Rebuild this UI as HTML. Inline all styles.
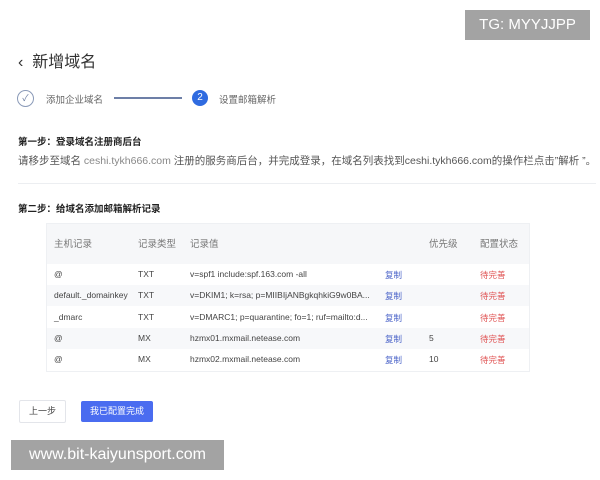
<!DOCTYPE html>
<html><head><meta charset="utf-8"><style>
body{margin:0;width:600px;height:480px;background:#fff;font-family:"Liberation Sans","Noto Sans CJK SC",sans-serif;position:relative;overflow:hidden;color:#333}
.a{position:absolute;white-space:nowrap}
.tbl{position:absolute;left:46px;top:223px;width:482px;height:147px;border:1px solid #eef0f3;background:#fff}
.hd{position:absolute;left:0;top:0;width:100%;height:40px;background:#f6f7f9}
.r{position:absolute;left:0;width:100%;height:21px;font-size:8.5px;color:#444}
.r span{position:absolute;top:5px}
.g{background:#f7f8fa}
</style></head><body>
<div class="a" style="left:465px;top:10px;width:125px;height:30px;background:#a3a3a3;color:#fff;font-size:15px;line-height:30px;text-align:center">TG: MYYJJPP</div>
<div class="a" style="left:18px;top:48px;font-size:16px;color:#333">‹&nbsp; 新增域名</div>
<div class="a" style="left:17px;top:90px;width:15px;height:15px;border:1px solid #8a9ab8;border-radius:50%;font-size:9px;color:#6a7ca0;text-align:center;line-height:15px">✓</div>
<div class="a" style="left:46px;top:92px;font-size:9.5px;color:#666">添加企业域名</div>
<div class="a" style="left:114px;top:97px;width:68px;height:2px;background:#6d7fa7"></div>
<div class="a" style="left:192px;top:90px;width:16px;height:16px;border-radius:50%;background:#2f6be0;color:#fff;font-size:10px;text-align:center;line-height:16px">2</div>
<div class="a" style="left:219px;top:92px;font-size:9.5px;color:#666">设置邮箱解析</div>
<div class="a" style="left:18px;top:134px;font-size:9.5px;font-weight:bold;color:#222">第一步：登录域名注册商后台</div>
<div class="a" style="left:18px;top:153px;font-size:10.5px;color:#555">请移步至域名 <span style="color:#888">ceshi.tykh666.com</span> 注册的服务商后台，并完成登录，在域名列表找到ceshi.tykh666.com的操作栏点击”解析 ”。</div>
<div class="a" style="left:18px;top:183px;width:578px;height:1px;background:#eceef1"></div>
<div class="a" style="left:18px;top:201px;font-size:9.5px;font-weight:bold;color:#222">第二步：给域名添加邮箱解析记录</div>
<div class="tbl">
<div class="hd"><div class="a" style="left:7px;top:12px;font-size:9.5px;color:#777">主机记录</div><div class="a" style="left:91px;top:12px;font-size:9.5px;color:#777">记录类型</div><div class="a" style="left:143px;top:12px;font-size:9.5px;color:#777">记录值</div><div class="a" style="left:382px;top:12px;font-size:9.5px;color:#777">优先级</div><div class="a" style="left:433px;top:12px;font-size:9.5px;color:#777">配置状态</div></div>
<div class="r" style="top:40px"><span style="left:7px">@</span><span style="left:91px">TXT</span><span style="left:143px">v=spf1 include:spf.163.com -all</span><span style="left:338px;color:#4a63c8">复制</span><span style="left:433px;color:#e05555">待完善</span></div>
<div class="r g" style="top:61px"><span style="left:7px">default._domainkey</span><span style="left:91px">TXT</span><span style="left:143px">v=DKIM1; k=rsa; p=MIIBIjANBgkqhkiG9w0BA...</span><span style="left:338px;color:#4a63c8">复制</span><span style="left:433px;color:#e05555">待完善</span></div>
<div class="r" style="top:83px"><span style="left:7px">_dmarc</span><span style="left:91px">TXT</span><span style="left:143px">v=DMARC1; p=quarantine; fo=1; ruf=mailto:d...</span><span style="left:338px;color:#4a63c8">复制</span><span style="left:433px;color:#e05555">待完善</span></div>
<div class="r g" style="top:104px"><span style="left:7px">@</span><span style="left:91px">MX</span><span style="left:143px">hzmx01.mxmail.netease.com</span><span style="left:338px;color:#4a63c8">复制</span><span style="left:382px">5</span><span style="left:433px;color:#e05555">待完善</span></div>
<div class="r" style="top:125px"><span style="left:7px">@</span><span style="left:91px">MX</span><span style="left:143px">hzmx02.mxmail.netease.com</span><span style="left:338px;color:#4a63c8">复制</span><span style="left:382px">10</span><span style="left:433px;color:#e05555">待完善</span></div>
</div>
<div class="a" style="left:19px;top:400px;width:45px;height:21px;border:1px solid #e3e5ea;border-radius:2px;font-size:9px;text-align:center;line-height:21px;color:#444">上一步</div>
<div class="a" style="left:81px;top:401px;width:72px;height:21px;background:#4a6cf0;border-radius:2px;font-size:9px;color:#fff;text-align:center;line-height:21px">我已配置完成</div>
<div class="a" style="left:11px;top:440px;width:213px;height:30px;background:#a3a3a3;color:#fff;font-size:16px;line-height:30px;text-align:center">www.bit-kaiyunsport.com</div>
</body></html>
